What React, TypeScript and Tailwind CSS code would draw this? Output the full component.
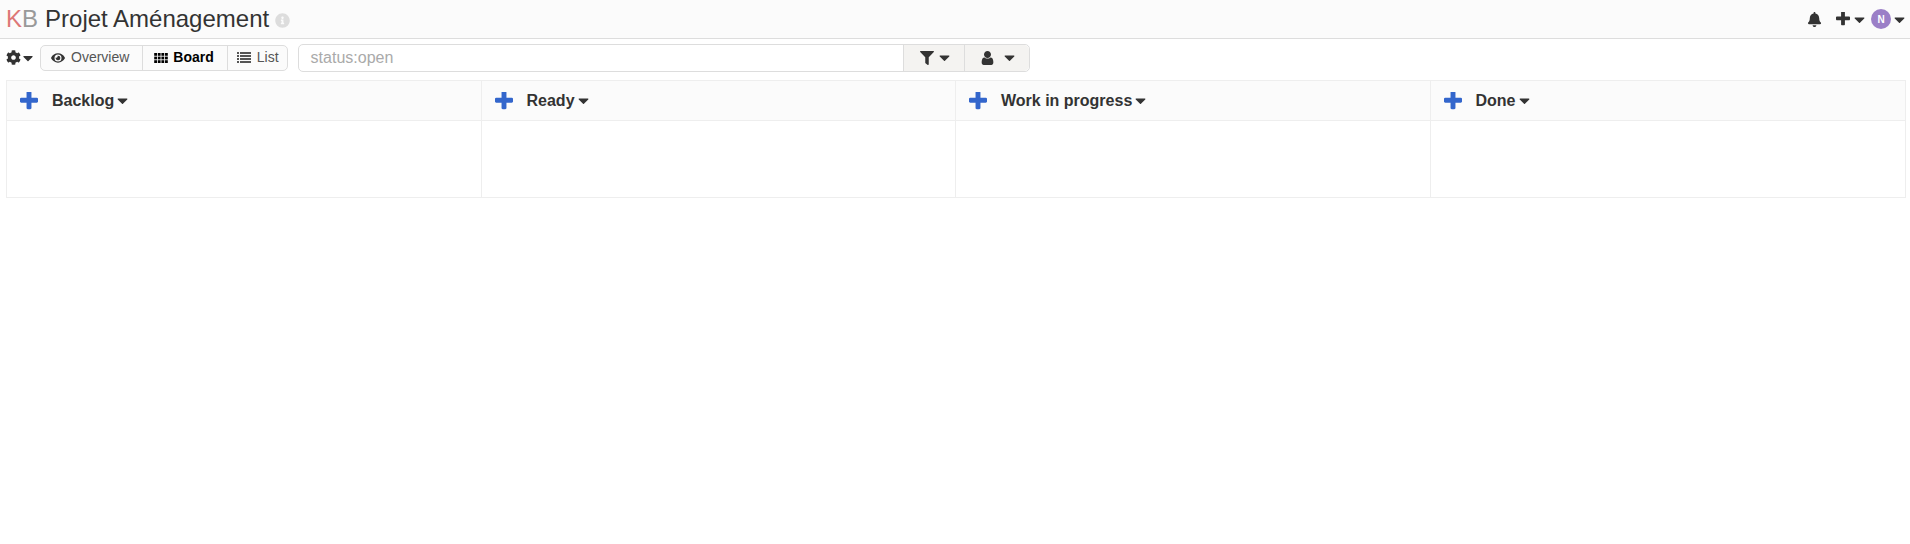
import { FaBell, FaCaretDown, FaCog, FaEye, FaFilter, FaInfoCircle } from 'react-icons/fa'

const columns = ['Backlog', 'Ready', 'Work in progress', 'Done']

// the picture uses the older, heavier plus
function PlusIcon({ size, className }: { size: number; className?: string }) {
  return (
    <svg width={size} height={size} viewBox="192 192 1408 1408" fill="currentColor" className={className}>
      <path d="M1600 736v192q0 40-28 68t-68 28h-416v416q0 40-28 68t-68 28h-192q-40 0-68-28t-28-68v-416h-416q-40 0-68-28t-28-68v-192q0-40 28-68t68-28h416v-416q0-40 28-68t68-28h192q40 0 68 28t28 68v416h416q40 0 68 28t28 68z" />
    </svg>
  )
}

function UserIcon() {
  return (
    <svg width={13} height={14} viewBox="256 128 1280 1536" fill="currentColor" className="text-[#333333]">
      <path d="M1536 1399q0 109-62.5 187t-150.5 78h-854q-88 0-150.5-78t-62.5-187q0-85 8.5-160.5t31.5-152 58.5-131 94-89 134.5-34.5q131 128 313 128t313-128q76 0 134.5 34.5t94 89 58.5 131 31.5 152 8.5 160.5zm-256-887q0 159-112.5 271.5t-271.5 112.5-271.5-112.5-112.5-271.5 112.5-271.5 271.5-112.5 271.5 112.5 112.5 271.5z" />
    </svg>
  )
}

function ThIcon() {
  const cells = []
  for (let r = 0; r < 3; r++) {
    for (let c = 0; c < 4; c++) {
      cells.push(<rect key={`${r}-${c}`} x={c * 3.5} y={r * 3.5} width={2.7} height={2.7} />)
    }
  }
  return (
    <svg width={14} height={10} viewBox="0 0 13.2 9.7" fill="currentColor">
      {cells}
    </svg>
  )
}

function ListIcon() {
  return (
    <svg width={14} height={11} viewBox="0 0 14 11" fill="currentColor">
      <rect x="0" y="0" width="2" height="2" />
      <rect x="3" y="0" width="11" height="2" />
      <rect x="0" y="3" width="2" height="2" />
      <rect x="3" y="3" width="11" height="2" />
      <rect x="0" y="6" width="2" height="2" />
      <rect x="3" y="6" width="11" height="2" />
      <rect x="0" y="9" width="2" height="2" />
      <rect x="3" y="9" width="11" height="2" />
    </svg>
  )
}

function Column({ title, last }: { title: string; last: boolean }) {
  return (
    <div className={last ? '' : 'border-r border-[#eeeeee]'}>
      <div className="h-[40px] bg-[#fbfbfb] border-b border-[#eeeeee] flex items-center pl-[13px]">
        <PlusIcon size={18} className="text-[#3366cc]" />
        <span className="ml-[14px] text-[16px] font-bold text-[#333333]">{title}</span>
        <FaCaretDown size={17} className="text-[#333333]" />
      </div>
      <div className="h-[76px]" />
    </div>
  )
}

export default function App() {
  return (
    <div className="min-h-[544px] bg-white font-['Liberation_Sans',Arial,sans-serif] text-[#333333]">
      <header className="h-[39px] bg-[#fbfbfb] border-b border-[#dddddd] flex items-center justify-between pl-[6px] pr-[2px]">
        <div className="flex items-center">
          <span className="text-[24px] leading-none">
            <span className="text-[#dd7777]">K</span>
            <span className="text-[#999999]">B</span>
          </span>
          <span className="ml-[7px] text-[24px] leading-none text-[#333333]">Projet Aménagement</span>
          <FaInfoCircle size={15} className="ml-[6px] mt-[3px] text-[#dddddd]" />
        </div>
        <div className="flex items-center">
          <FaBell size={15} className="text-[#333333]" />
          <PlusIcon size={14} className="ml-[14px] text-[#333333]" />
          <FaCaretDown size={17} className="ml-[1px] text-[#333333]" />
          <span className="ml-[3px] w-[20px] h-[20px] rounded-full bg-[#9b7fc7] text-white text-[10px] font-bold flex items-center justify-center">N</span>
          <FaCaretDown size={17} className="text-[#333333]" />
        </div>
      </header>

      <div className="flex items-center pl-[6px] mt-[5px] h-[27px]">
        <FaCog size={15} className="text-[#333333]" />
        <FaCaretDown size={16} className="-ml-[1px] text-[#333333]" />
        <nav className="ml-[4px] h-[26px] flex rounded-[5px] border border-[#dddddd] bg-[#fbfbfb] text-[14px]">
          <a className="pl-[10px] pr-[13px] flex items-center gap-[6px] text-[#555555] border-r border-[#dddddd]">
            <FaEye size={14} className="text-[#333333]" />
            Overview
          </a>
          <a className="pl-[11px] pr-[13px] flex items-center gap-[5px] font-bold text-black border-r border-[#dddddd]">
            <ThIcon />
            Board
          </a>
          <a className="pl-[9px] pr-[8px] flex items-center gap-[6px] text-[#555555]">
            <ListIcon />
            List
          </a>
        </nav>
        <div className="ml-[10px] w-[732px] h-[28px] flex rounded-[5px] border border-[#dddddd] bg-white">
          <div className="flex-1 pl-[12px] flex items-center text-[16px] text-[#aaaaaa]">status:open</div>
          <div className="w-[61px] flex items-center justify-center gap-[2px] pl-[6px] bg-[#f4f3f1] border-l border-[#dddddd]">
            <FaFilter size={14} className="text-[#333333]" />
            <FaCaretDown size={17} className="text-[#333333]" />
          </div>
          <div className="flex-1 max-w-[65px] flex items-center justify-center gap-[7px] pl-[5px] bg-[#f4f3f1] border-l border-[#dddddd] rounded-r-[5px]">
            <UserIcon />
            <FaCaretDown size={17} className="text-[#333333]" />
          </div>
        </div>
      </div>

      <div className="ml-[6px] mr-[4px] mt-[9px] grid grid-cols-4 border border-[#eeeeee]">
        {columns.map((c, i) => (
          <Column key={c} title={c} last={i === columns.length - 1} />
        ))}
      </div>
    </div>
  )
}
